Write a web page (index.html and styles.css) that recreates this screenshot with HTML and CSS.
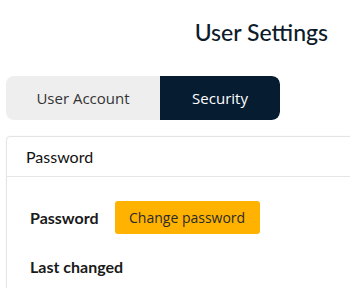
FILE: index.html
```html
<!DOCTYPE html>
<html>
<head>
<meta charset="utf-8">
<link rel="stylesheet" href="styles.css">
</head>
<body>
<div class="page">
  <h1 class="title">User Settings</h1>
  <div class="tabs">
    <div class="tab">User Account</div>
    <div class="tab active">Security</div>
  </div>
  <div class="card">
    <div class="card-header">Password</div>
    <div class="card-body">
      <div class="row">
        <span class="label">Password</span>
        <button class="btn">Change password</button>
      </div>
      <div class="row">
        <span class="label">Last changed</span>
      </div>
    </div>
  </div>
</div>
</body>
</html>
```
FILE: styles.css
```css
html, body {
  margin: 0;
  padding: 0;
  background: #ffffff;
  overflow: hidden;
}
.page {
  padding-left: 6px;
  font-family: "Open Sans", "Noto Sans", sans-serif;
  color: #222;
}
.title {
  margin: 0;
  padding: 18px 22px 0 0;
  text-align: right;
  font-family: Lato, sans-serif;
  font-weight: 500;
  font-size: 23px;
  line-height: 28px;
  color: #0d1b2a;
}
.tabs {
  margin-top: 30px;
  display: grid;
  grid-template-columns: 154px 120px;
  width: 274px;
  height: 44px;
  border-radius: 8px;
  overflow: hidden;
  background: #eeeeee;
}
.tab {
  display: flex;
  align-items: center;
  justify-content: center;
  font-size: 15px;
  color: #333;
}
.tab.active {
  background: #061c31;
  color: #ffffff;
  border-radius: 0 8px 8px 0;
}
.card {
  margin-top: 16px;
  width: 370px;
  border: 1px solid #e4e4e4;
  border-radius: 4px;
  box-shadow: 0 0 2px rgba(0,0,0,0.06);
}
.card-header {
  height: 40px;
  box-sizing: border-box;
  padding: 0 19px;
  display: flex;
  align-items: center;
  border-bottom: 1px solid #e6e6e6;
  font-family: Lato, sans-serif;
  font-size: 16px;
  color: #111;
}
.card-body {
  padding: 24px 23px 0;
}
.row {
  display: flex;
  align-items: center;
  gap: 16px;
  height: 33px;
  margin-bottom: 16px;
}
.label {
  font-family: Lato, sans-serif;
  font-weight: 700;
  font-size: 16px;
  color: #1a1a1a;
}
.btn {
  height: 33px;
  width: 145px;
  border: none;
  border-radius: 3px;
  background: #ffb300;
  font-family: "Open Sans", sans-serif;
  font-size: 14px;
  color: #2a2a2a;
  padding: 0;
}
```
